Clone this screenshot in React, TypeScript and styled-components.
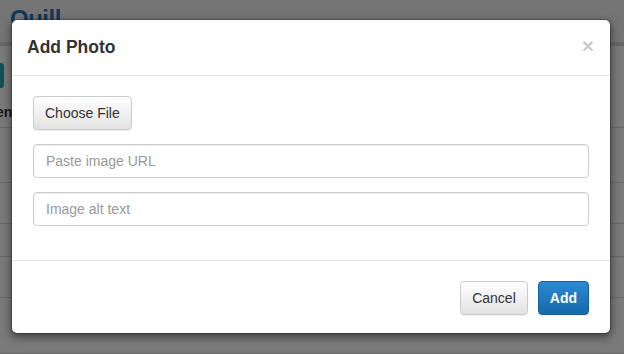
import styled, { createGlobalStyle } from "styled-components";

const GlobalStyle = createGlobalStyle`
  html, body {
    margin: 0;
    padding: 0;
    width: 624px;
    height: 354px;
    overflow: hidden;
    font-family: "Liberation Sans", Arial, sans-serif;
    background: #fff;
  }
`;

// page behind the dialog
const Page = styled.div`
  width: 624px;
  height: 354px;
  position: relative;
  overflow: hidden;
`;

const TopBar = styled.div`
  height: 42px;
  background: #f4f4f4;
  border-bottom: 4px solid #d8d8d8;
  display: flex;
  align-items: center;
  padding-left: 10px;
`;

const Logo = styled.div`
  font-size: 24px;
  font-weight: bold;
  color: #2d78b8;
  letter-spacing: -0.5px;
  margin-top: -4px;
`;

const Row = styled.div<{ $h: number }>`
  height: ${(p) => p.$h}px;
  border-bottom: 1px solid #d6d6d6;
  display: flex;
  flex-direction: column;
  justify-content: center;
  box-sizing: border-box;
`;

const TealButton = styled.div`
  width: 30px;
  height: 25px;
  margin: 17px 0 0 -26px;
  background: #2aa3b3;
  border-radius: 3px;
`;

const RowLabel = styled.div<{ $top: number; $left: number; $light?: boolean }>`
  margin: ${(p) => p.$top}px 0 0 ${(p) => p.$left}px;
  font-size: 14px;
  font-weight: ${(p) => (p.$light ? "normal" : "bold")};
  color: ${(p) => (p.$light ? "#555" : "#333")};
  white-space: nowrap;
`;

const Overlay = styled.div`
  position: absolute;
  inset: 0;
  background: rgba(0, 0, 0, 0.52);
`;

// dialog
const Dialog = styled.div`
  position: absolute;
  top: 19px;
  left: 11px;
  width: 600px;
  box-sizing: border-box;
  background: #fff;
  border: 1px solid rgba(0, 0, 0, 0.2);
  border-radius: 6px;
  box-shadow: 0 3px 9px rgba(0, 0, 0, 0.5);
  background-clip: padding-box;
`;

const Header = styled.div`
  display: flex;
  align-items: center;
  justify-content: space-between;
  padding: 15px 16px 15px 15px;
  border-bottom: 1px solid #e5e5e5;
`;

const Title = styled.h4`
  margin: 0;
  font-size: 17.5px;
  line-height: 25px;
  font-weight: bold;
  color: #333;
`;

const Close = styled.span`
  font-size: 21px;
  font-weight: bold;
  line-height: 1;
  color: #000;
  opacity: 0.2;
  margin-top: -4px;
`;

const Body = styled.div`
  padding: 20px 21px 34px 21px;
  display: flex;
  flex-direction: column;
  gap: 14px;
`;

const Button = styled.button<{ $primary?: boolean }>`
  height: 34px;
  padding: 6px 11px;
  font-family: "Liberation Sans", Arial, sans-serif;
  font-size: 14px;
  border-radius: 4px;
  border: 1px solid ${(p) => (p.$primary ? "#1a5f9c" : "#cccccc")};
  color: ${(p) => (p.$primary ? "#fff" : "#333")};
  font-weight: ${(p) => (p.$primary ? "bold" : "normal")};
  background: ${(p) =>
    p.$primary
      ? "linear-gradient(#2b8ad2, #1669ad)"
      : "linear-gradient(#ffffff, #e2e2e2)"};
  box-shadow: 0 1px 1px rgba(0, 0, 0, 0.08);
  box-sizing: border-box;
`;

const FileRow = styled.div`
  display: flex;
`;

const Input = styled.input`
  display: block;
  height: 34px;
  width: 100%;
  box-sizing: border-box;
  padding: 6px 12px;
  margin: 0;
  font-family: "Liberation Sans", Arial, sans-serif;
  font-size: 14px;
  color: #555;
  border: 1px solid #cccccc;
  border-radius: 4px;
  box-shadow: inset 0 1px 1px rgba(0, 0, 0, 0.075);
  &::placeholder {
    color: #999;
  }
`;

const Footer = styled.div`
  display: flex;
  justify-content: flex-end;
  gap: 10px;
  padding: 20px 21px 18px 21px;
  border-top: 1px solid #e5e5e5;
`;

export default function App() {
  return (
    <>
      <GlobalStyle />
      <Page>
        <TopBar>
          <Logo>Quill</Logo>
        </TopBar>
        <Row $h={82} style={{ justifyContent: "flex-start" }}>
          <TealButton />
          <RowLabel $top={16} $left={-36}>Content</RowLabel>
        </Row>
        <Row $h={55} />
        <Row $h={41} />
        <Row $h={33}>
          <RowLabel $top={0} $left={-26} $light>
            new
          </RowLabel>
        </Row>
        <Row $h={41} />
        <Row $h={56} />
        <Overlay />
        <Dialog>
          <Header>
            <Title>Add Photo</Title>
            <Close>×</Close>
          </Header>
          <Body>
            <FileRow>
              <Button>Choose File</Button>
            </FileRow>
            <Input placeholder="Paste image URL" />
            <Input placeholder="Image alt text" />
          </Body>
          <Footer>
            <Button>Cancel</Button>
            <Button $primary>Add</Button>
          </Footer>
        </Dialog>
      </Page>
    </>
  );
}
